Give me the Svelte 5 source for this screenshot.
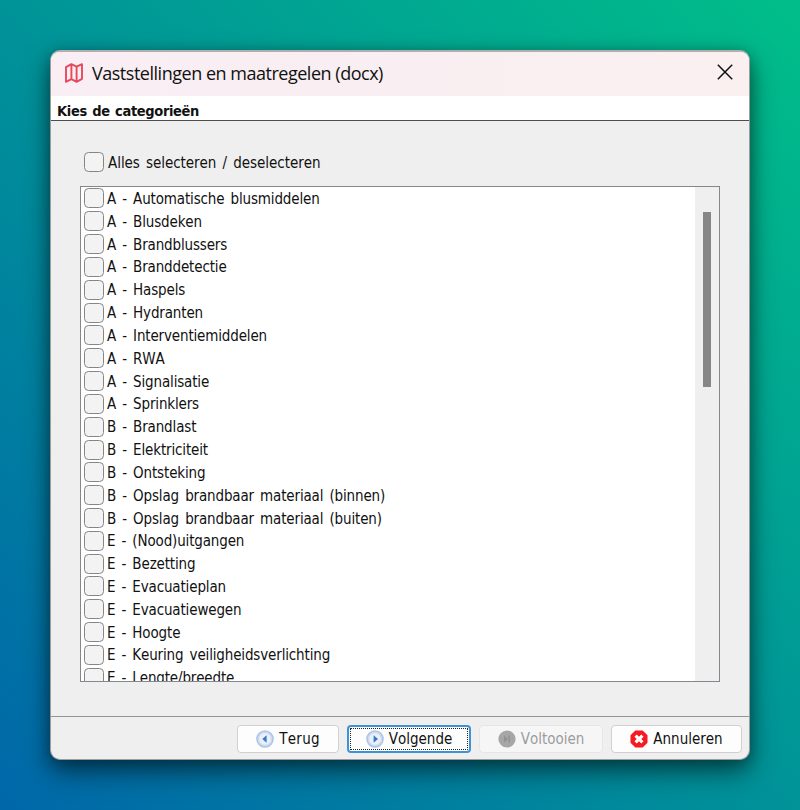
<script lang="ts">
    let selectAll = $state(false)

    let categories = $state([
        { label: 'A - Automatische blusmiddelen', checked: false },
        { label: 'A - Blusdeken', checked: false },
        { label: 'A - Brandblussers', checked: false },
        { label: 'A - Branddetectie', checked: false },
        { label: 'A - Haspels', checked: false },
        { label: 'A - Hydranten', checked: false },
        { label: 'A - Interventiemiddelen', checked: false },
        { label: 'A - RWA', checked: false },
        { label: 'A - Signalisatie', checked: false },
        { label: 'A - Sprinklers', checked: false },
        { label: 'B - Brandlast', checked: false },
        { label: 'B - Elektriciteit', checked: false },
        { label: 'B - Ontsteking', checked: false },
        { label: 'B - Opslag brandbaar materiaal (binnen)', checked: false },
        { label: 'B - Opslag brandbaar materiaal (buiten)', checked: false },
        { label: 'E - (Nood)uitgangen', checked: false },
        { label: 'E - Bezetting', checked: false },
        { label: 'E - Evacuatieplan', checked: false },
        { label: 'E - Evacuatiewegen', checked: false },
        { label: 'E - Hoogte', checked: false },
        { label: 'E - Keuring veiligheidsverlichting', checked: false },
        { label: 'E - Lengte/breedte', checked: false }
    ])

    function toggleAll() {
        for (const category of categories) {
            category.checked = selectAll
        }
    }
</script>

<div class="desktop">
    <div class="window">
        <header class="titlebar">
            <svg class="map" width="18" height="20" viewBox="0 0 18 20">
                <path d="M1 4.2 6.4 1.2 11.6 3.6 17 1.2V15.8L11.6 18.8 6.4 16.2 1 18.8ZM6.4 1.2V16.2M11.6 3.6V18.8" />
            </svg>
            <h1>Vaststellingen en maatregelen (docx)</h1>
            <button class="close" aria-label="Sluiten">
                <svg width="16" height="16" viewBox="0 0 16 16">
                    <path d="M.8.8 15.2 15.2M15.2.8.8 15.2" />
                </svg>
            </button>
        </header>
        <h2>Kies de categorieën</h2>

        <main>
            <label class="all">
                <input type="checkbox" bind:checked={selectAll} onchange={toggleAll} />
                <span>Alles selecteren / deselecteren</span>
            </label>
            <div class="list">
                <div class="rows">
                    {#each categories as category}
                        <label class="row">
                            <input type="checkbox" bind:checked={category.checked} />
                            <span>{category.label}</span>
                        </label>
                    {/each}
                </div>
                <div class="scrollbar"><div class="thumb"></div></div>
            </div>
        </main>

        <footer>
            <button class="button back">
                <svg width="18" height="18" viewBox="0 0 18 18">
                    <circle class="ring" cx="9" cy="9" r="8" />
                    <circle class="disc" cx="9" cy="9" r="6.4" />
                    <path class="arrow" d="M10.6 5.2V12.8L6.3 9Z" />
                </svg>
                <span>Terug</span>
            </button>
            <button class="button next">
                <svg width="18" height="18" viewBox="0 0 18 18">
                    <circle class="ring" cx="9" cy="9" r="8" />
                    <circle class="disc" cx="9" cy="9" r="6.4" />
                    <path class="arrow" d="M7.6 5.2V12.8L12 9Z" />
                </svg>
                <span>Volgende</span>
            </button>
            <button class="button finish" disabled>
                <svg width="18" height="18" viewBox="0 0 18 18">
                    <circle cx="9" cy="9" r="8.6" fill="#a6a6a6" />
                    <path d="M6 5.5V12.5L9.8 9ZM10.4 5.5H12V12.5H10.4Z" fill="#929292" />
                </svg>
                <span>Voltooien</span>
            </button>
            <button class="button cancel">
                <svg width="18" height="18" viewBox="0 0 18 18">
                    <path d="M5.3.5H12.7L17.5 5.3V12.7L12.7 17.5H5.3L.5 12.7V5.3Z" fill="#f51b20" />
                    <path d="M5.6 5.6 12.4 12.4M12.4 5.6 5.6 12.4" stroke="#fff" stroke-width="3.2" />
                </svg>
                <span>Annuleren</span>
            </button>
        </footer>
    </div>
</div>

<style>
    :global(body) {
        margin: 0;
    }

    .desktop {
        box-sizing: border-box;
        width: 800px;
        height: 810px;
        padding: 50px;
        overflow: hidden;
        background: linear-gradient(to top right, #0067a9, #009398 50%, #00be89);
        font-family: "DejaVu Sans Condensed", "DejaVu Sans", sans-serif;
        font-stretch: condensed;
        font-kerning: none;
        font-size: 15px;
        color: #111;
    }

    .window {
        box-sizing: border-box;
        width: 700px;
        height: 710px;
        display: flex;
        flex-direction: column;
        overflow: hidden;
        border: 1px solid #9d9d9d;
        border-top: 2px solid #b0aeae;
        border-radius: 10px;
        background: #efefef;
        box-shadow: 0 12px 26px rgba(0, 0, 0, 0.5), 0 2px 14px rgba(0, 0, 0, 0.25);
    }

    .titlebar {
        height: 44px;
        flex: none;
        display: flex;
        align-items: center;
        padding: 0 16px 0 14px;
        background: linear-gradient(90deg, #f8eef4, #faf0f0);
    }

    .map {
        margin-top: -2px;
        fill: none;
        stroke: #e8485c;
        stroke-width: 1.9;
        stroke-linejoin: round;
    }

    h1 {
        flex: 1;
        margin: -2px 0 0 9px;
        font-family: "Open Sans", "Noto Sans", sans-serif;
        font-size: 18px;
        font-weight: 400;
        font-stretch: normal;
        font-kerning: normal;
        letter-spacing: -0.48px;
        white-space: nowrap;
    }

    .close {
        display: flex;
        padding: 0;
        margin-top: -4px;
        border: 0;
        background: none;
    }

    .close path {
        stroke: #111;
        stroke-width: 1.5;
    }

    h2 {
        height: 24px;
        flex: none;
        margin: 0;
        padding-left: 6px;
        border-bottom: 1px solid #4d4d4d;
        background: #fff;
        font-size: 14.5px;
        font-weight: 700;
        line-height: 30px;
        letter-spacing: -0.35px;
        word-spacing: 1.2px;
    }

    main {
        flex: 1;
        min-height: 0;
        padding: 31px 29px 0 29px;
    }

    label {
        display: flex;
        align-items: center;
        white-space: nowrap;
        word-spacing: 2px;
    }

    .all {
        height: 20px;
        padding-left: 4px;
        margin-bottom: 14px;
        letter-spacing: -0.05px;
    }

    .all span {
        margin: 1px 0 0 4px;
    }

    input {
        appearance: none;
        box-sizing: border-box;
        width: 20px;
        height: 20px;
        flex: none;
        margin: 0;
        border: 1.5px solid #868686;
        border-radius: 4.5px;
        background: #f3f3f3;
    }

    input:checked {
        background: #0067c0;
    }

    .list {
        box-sizing: border-box;
        width: 640px;
        height: 496px;
        display: flex;
        overflow: hidden;
        border: 1px solid #85878f;
        background: #fff;
    }

    .rows {
        flex: 1;
        padding-left: 3px;
    }

    .row {
        height: 22.84px;
        letter-spacing: -0.15px;
    }

    .row span {
        margin: 1px 0 0 3px;
    }

    .scrollbar {
        width: 24px;
        background: #efefef;
    }

    .thumb {
        width: 8px;
        height: 175px;
        margin: 25px 0 0 8px;
        background: #868686;
    }

    footer {
        box-sizing: border-box;
        height: 43px;
        flex: none;
        display: flex;
        justify-content: flex-end;
        padding: 8px 7px 0 0;
        border-top: 1px solid #949494;
    }

    .button {
        box-sizing: border-box;
        height: 28px;
        display: flex;
        align-items: center;
        justify-content: center;
        gap: 5px;
        padding: 0;
        border: 1px solid #d0d0d0;
        border-radius: 4px;
        background: #fdfdfd;
        color: #111;
        font: inherit;
        font-kerning: none;
        white-space: nowrap;
    }

    .back {
        width: 102px;
        margin-right: 8px;
        letter-spacing: 0.3px;
    }

    .next {
        width: 124px;
        margin-right: 8px;
        border: 2px solid #3f93d4;
        outline: 1px dotted #222;
        outline-offset: -4px;
    }

    .finish {
        width: 124px;
        margin-right: 8px;
        border-color: #e6e6e6;
        background: #f6f6f6;
        color: #9c9c9c;
    }

    .cancel {
        width: 131px;
    }

    .ring {
        fill: #e6eefa;
        stroke: #aac4ea;
        stroke-width: 1.6;
    }

    .disc {
        fill: #e9f0fa;
        stroke: #c7d3e4;
    }

    .arrow {
        fill: #3a77c4;
    }
</style>
